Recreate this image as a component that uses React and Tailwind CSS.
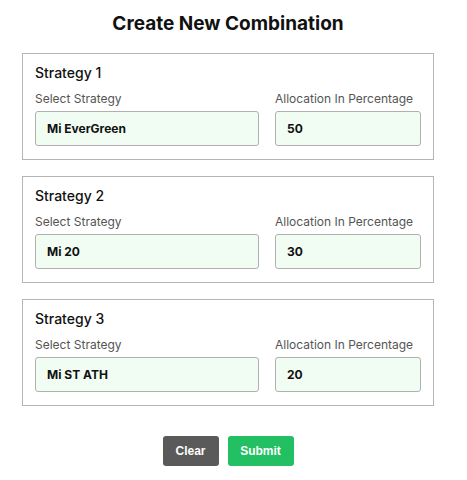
import React, { useState } from 'react';

const initial = [
    { strategy: 'Mi EverGreen', allocation: '50' },
    { strategy: 'Mi 20', allocation: '30' },
    { strategy: 'Mi ST ATH', allocation: '20' },
];

const App = () => {
    const [rows, setRows] = useState(initial);

    const update = (i, key, value) => {
        const next = rows.map((r, idx) => (idx === i ? { ...r, [key]: value } : r));
        setRows(next);
    };

    const clear = () => setRows(rows.map(() => ({ strategy: '', allocation: '' })));

    return (
        <div className="min-h-screen bg-white font-['Inter',sans-serif] text-[#111]">
            <div className="ml-[22px] w-[412px]">
                <h1 className="mt-[10px] text-center text-[19px] font-bold leading-[28px]">Create New Combination</h1>

                <div className="mt-[15px] flex flex-col gap-[16px]">
                    {rows.map((row, i) => (
                        <div key={i} className="border border-[#b5b5b5] px-[12px] pt-[9px] pb-[13px]">
                            <h2 className="text-[14px] font-medium leading-5">Strategy {i + 1}</h2>
                            <div className="mt-[8px] flex gap-[16px]">
                                <div className="w-[224px]">
                                    <label className="block text-[12px] leading-4 text-[#555]">Select Strategy</label>
                                    <input
                                        type="text"
                                        value={row.strategy}
                                        onChange={(e) => update(i, 'strategy', e.target.value)}
                                        className="mt-[4px] block h-[35px] w-full rounded-[3px] border border-[#b0b0b0] bg-[#f1fdf3] px-[11px] text-[12px] font-bold text-[#111] outline-none"
                                    />
                                </div>
                                <div className="flex-1">
                                    <label className="block text-[12px] leading-4 text-[#555]">Allocation In Percentage</label>
                                    <input
                                        type="text"
                                        value={row.allocation}
                                        onChange={(e) => update(i, 'allocation', e.target.value)}
                                        className="mt-[4px] block h-[35px] w-full rounded-[3px] border border-[#b0b0b0] bg-[#f1fdf3] px-[11px] text-[12px] font-bold text-[#111] outline-none"
                                    />
                                </div>
                            </div>
                        </div>
                    ))}
                </div>

                <div className="mt-[30px] flex justify-center gap-[9px]">
                    <button
                        onClick={clear}
                        className="h-[30px] w-[56px] rounded-[3px] bg-[#5a5a5a] font-['Liberation_Sans',sans-serif] text-[12px] font-bold text-white"
                    >
                        Clear
                    </button>
                    <button className="h-[30px] w-[66px] rounded-[3px] bg-[#22c063] font-['Liberation_Sans',sans-serif] text-[12px] font-bold text-white">
                        Submit
                    </button>
                </div>
            </div>
        </div>
    );
};

export default App;
